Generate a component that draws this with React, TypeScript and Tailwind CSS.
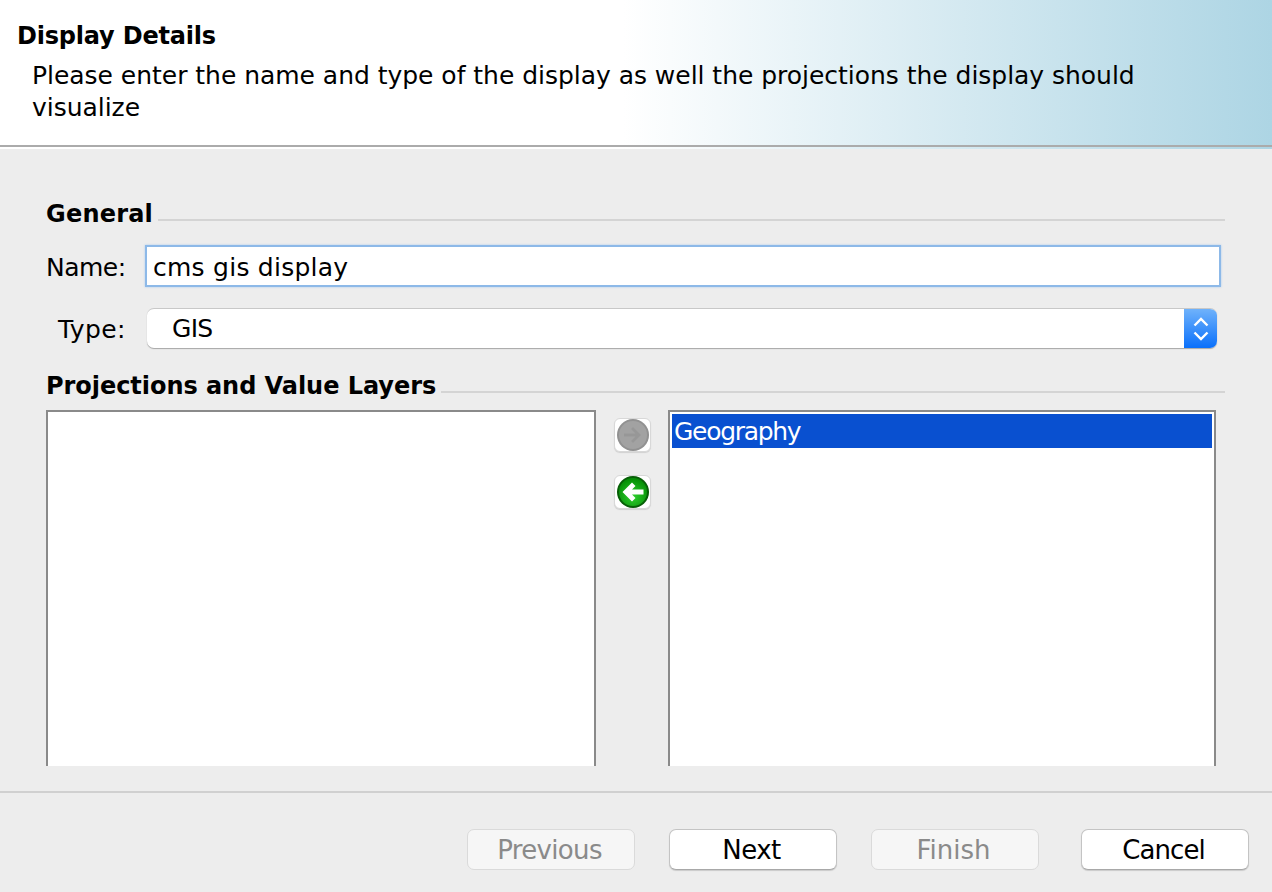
const FONT = "font-['DejaVu_Sans',sans-serif]"

function SectionTitle({ title, className, tracking }: { title: string; className: string; tracking: string }) {
  return (
    <div className={`flex items-start ${className}`}>
      <span className={`text-[24px] leading-[32px] font-bold text-black ${tracking}`}>{title}</span>
      <div className="flex-1 h-[2px] mt-[21px] ml-[5px] bg-[#d4d4d4]" />
    </div>
  )
}

function WizardButton({ label, enabled, tracking }: { label: string; enabled?: boolean; tracking: string }) {
  const look = enabled
    ? 'bg-white text-black border-[#c4c4c4] border-b-[#a8a8a8] shadow-[0_1px_1px_rgba(0,0,0,0.15)]'
    : 'bg-[#f6f6f6] text-[#8a8a8a] border-[#dadada]'
  return (
    <button className={`w-[168px] h-[41px] pr-[3px] rounded-[7px] border text-[26px] leading-none ${tracking} ${look}`}>
      {label}
    </button>
  )
}

function ArrowButton({ enabled, direction }: { enabled?: boolean; direction: 'left' | 'right' }) {
  return (
    <div className="w-[37px] h-[34px] rounded-[6px] bg-white border border-[#d8d8d8] shadow-[0_1px_1px_rgba(0,0,0,0.12)] flex items-center justify-center">
      <svg width="32" height="32" viewBox="0 0 32 32">
        <defs>
          <radialGradient id="greenFill" cx="50%" cy="65%" r="60%">
            <stop offset="0%" stopColor="#30d030" />
            <stop offset="100%" stopColor="#069006" />
          </radialGradient>
        </defs>
        <circle cx="16" cy="16" r="16" fill={enabled ? '#075f07' : '#919191'} />
        <circle cx="16" cy="16" r="14" fill={enabled ? 'url(#greenFill)' : '#a2a2a2'} />
        {direction === 'left' ? (
          <path d="M15 6.5 L5.5 16 L15 25.5 L18.5 22 L15 18.5 H26.5 V13.5 H15 L18.5 10 Z" fill="#ffffff" />
        ) : (
          <path d="M16 8 L24 16 L16 24 L14 22 L18.5 17.5 H7 V14.5 H18.5 L14 10 Z" fill="#979797" />
        )}
      </svg>
    </div>
  )
}

export default function App() {
  return (
    <div className={`w-[1272px] h-[892px] overflow-hidden bg-[#ededed] ${FONT}`}>
      <div className="h-[145px] pl-[17px] pt-[20px] bg-[linear-gradient(to_right,#ffffff_0%,#ffffff_49%,#add5e4_100%)]">
        <div className="text-[24px] leading-[32px] font-bold tracking-[-0.2px] text-black">Display Details</div>
        <div className="mt-[8px] pl-[15px] pr-[120px] text-[25px] leading-[32px] tracking-[-0.03px] text-black">
          Please enter the name and type of the display as well the projections the display should visualize
        </div>
      </div>
      <div className="h-[2px] bg-[#ababab]" />
      <div className="h-[2px] bg-[linear-gradient(to_right,#ffffff_0%,#ffffff_49%,#add5e4_100%)]" />

      <div className="h-[617px] pl-[46px] pr-[47px]">
        <SectionTitle title="General" className="pt-[49px]" tracking="tracking-[0.2px]" />

        <div className="flex items-start h-[42px] mt-[15px]">
          <span className="w-[99px] pt-[4px] text-[25px] leading-[38px] tracking-[-0.5px] text-black">Name:</span>
          <div className="w-[1076px] h-[42px] bg-white border-2 border-[#8db9e8] shadow-[0_0_2px_#a9c9ee] pl-[6px] text-[25px] leading-[42px] tracking-[0.25px] text-black">
            cms gis display
          </div>
        </div>

        <div className="flex items-start h-[40px] mt-[21px]">
          <span className="w-[101px] pl-[12px] pt-[3px] text-[25px] leading-[38px] tracking-[0.4px] text-black">Type:</span>
          <div className="w-[1070px] h-[40px] flex rounded-[7px] bg-white border-t border-[#c8c8c8] shadow-[0_1px_1px_rgba(0,0,0,0.3)] overflow-hidden">
            <span className="flex-1 pl-[25px] text-[25px] leading-[40px] tracking-[-0.7px] text-black">GIS</span>
            <div className="w-[33px] bg-[linear-gradient(to_bottom,#6fb2fb,#0a70fb)] flex items-center justify-center">
              <svg width="16" height="26" viewBox="0 0 16 26" fill="none" stroke="#ffffff" strokeWidth="2.4">
                <path d="M1.5 9.5 L8 3 L14.5 9.5" />
                <path d="M1.5 16.5 L8 23 L14.5 16.5" />
              </svg>
            </div>
          </div>
        </div>

        <SectionTitle title="Projections and Value Layers" className="pt-[22px]" tracking="tracking-[-0.05px]" />

        <div className="flex items-start mt-[8px]">
          <div className="w-[550px] h-[356px] bg-white border-2 border-b-0 border-[#8a8a8a]" />
          <div className="w-[72px] pl-[18px] pt-[8px] flex flex-col gap-[23px]">
            <ArrowButton direction="right" />
            <ArrowButton enabled direction="left" />
          </div>
          <div className="w-[548px] h-[356px] bg-white border-2 border-b-0 border-[#8a8a8a] pl-[2px] pr-[2px] pt-[2px]">
            <div className="h-[34px] bg-[#0950d0] pl-[2px] text-[25px] leading-[36px] tracking-[-1.3px] text-white">Geography</div>
          </div>
        </div>
      </div>

      <div className="h-[25px]" />
      <div className="h-[2px] bg-[#d0d0d0]" />
      <div className="flex items-start pt-[36px] pl-[467px]">
        <WizardButton label="Previous" tracking="tracking-[-0.65px]" />
        <div className="w-[34px]" />
        <WizardButton label="Next" enabled tracking="tracking-[-0.5px]" />
        <div className="w-[34px]" />
        <WizardButton label="Finish" tracking="tracking-[0px]" />
        <div className="w-[42px]" />
        <WizardButton label="Cancel" enabled tracking="tracking-[-0.9px]" />
      </div>
    </div>
  )
}
